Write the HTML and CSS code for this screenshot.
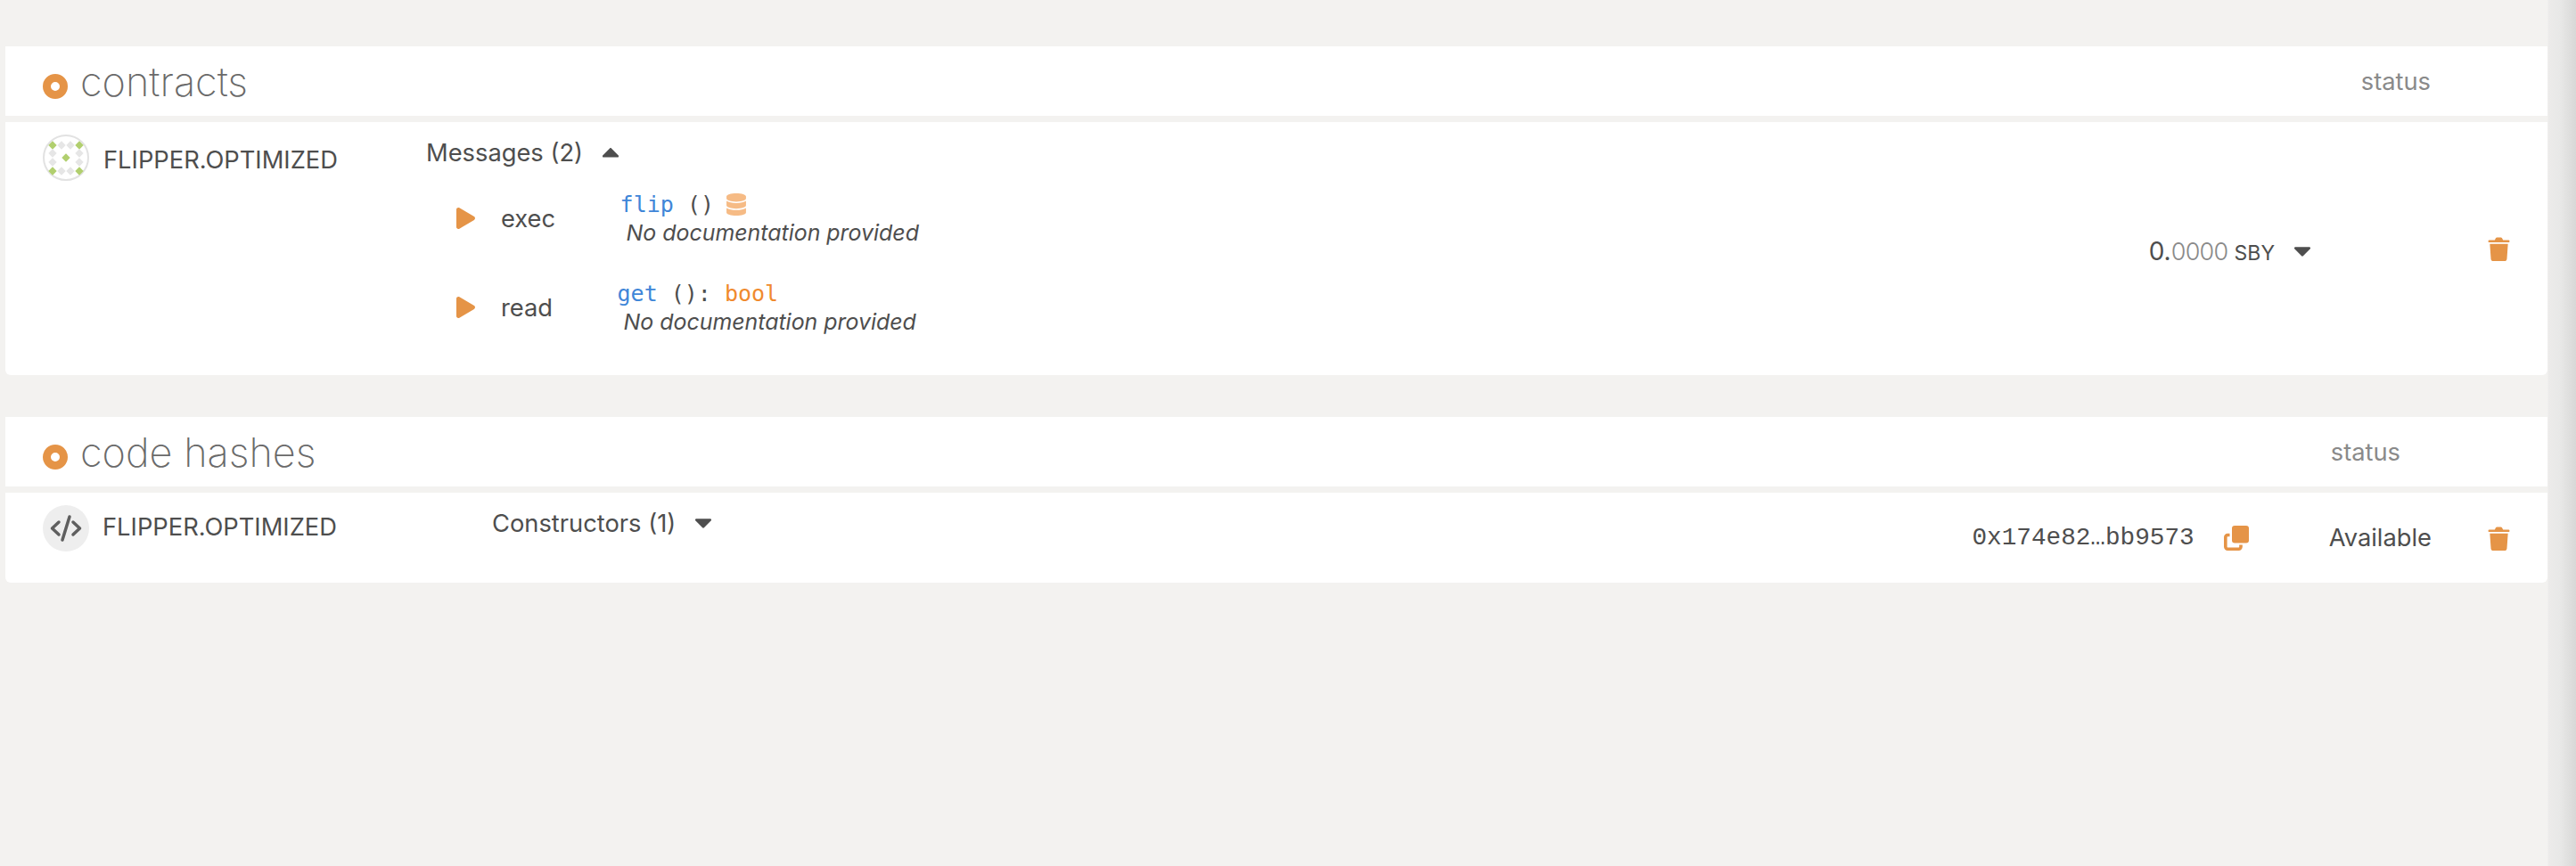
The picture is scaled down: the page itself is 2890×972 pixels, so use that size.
FILE: index.html
```html
<!DOCTYPE html>
<html lang="en">
<head>
    <meta charset="UTF-8">
    <title>Contracts</title>
    <link rel="stylesheet" href="styles.css">
</head>
<body>
    <svg class="defs" width="0" height="0">
        <defs>
            <path id="play" d="M424.4 214.7L72.4 6.6C43.8-10.3 0 6.1 0 47.9V464c0 37.5 40.7 60.1 72.4 41.3l352-208c31.4-18.5 31.5-64.1 0-82.6z"/>
            <path id="caret-down" d="M31.3 192h257.3c17.8 0 26.7 21.5 14.1 34.1L174.1 354.8c-7.8 7.8-20.5 7.8-28.3 0L17.2 226.1C4.6 213.5 13.5 192 31.3 192z"/>
            <path id="caret-up" d="M288.7 352H31.3c-17.8 0-26.7-21.5-14.1-34.1l128.7-129.6c7.8-7.8 20.5-7.8 28.3 0l128.7 129.6c12.5 12.6 3.6 34.1-14.2 34.1z"/>
            <g id="trash">
                <path d="M2 5h8l1.500-2.400C12 2 12.500 1.800 13 1.800h6c.5 0 1 .2 1.500.8L22 5h8c.8 0 1.200.4 1.200 1.100v.9c0 .7-.4 1.100-1.200 1.100H2C1.200 8.100.8 7.700.8 7v-.9C.8 5.400 1.200 5 2 5z"/>
                <path d="M3 10h26l-1.500 19c-.1 1.700-1.300 3-3 3H7.500c-1.700 0-2.900-1.300-3-3z"/>
            </g>
            <polygon id="dot" points="0,-4.700 4.700,0 0,4.700 -4.700,0"/>
        </defs>
    </svg>

    <section class="panel">
        <header class="panel-head">
            <span class="ring"></span>
            <h1>contracts</h1>
            <span class="col-status">status</span>
        </header>
        <div class="row row-contract">
            <div class="name-cell">
                <svg class="avatar" viewBox="0 0 52 52">
                    <circle class="avatar-ring" cx="26" cy="26" r="25"/>
                    <use class="dot-on" href="#dot" x="11" y="12"/>
                    <use class="dot-off" href="#dot" x="21" y="12"/>
                    <use class="dot-off" href="#dot" x="31" y="12"/>
                    <use class="dot-on" href="#dot" x="41" y="12"/>
                    <use class="dot-off" href="#dot" x="11" y="21"/>
                    <use class="dot-off" href="#dot" x="41" y="21"/>
                    <use class="dot-on" href="#dot" x="26" y="26"/>
                    <use class="dot-off" href="#dot" x="11" y="31"/>
                    <use class="dot-off" href="#dot" x="41" y="31"/>
                    <use class="dot-on" href="#dot" x="11" y="41"/>
                    <use class="dot-off" href="#dot" x="21" y="41"/>
                    <use class="dot-off" href="#dot" x="31" y="41"/>
                    <use class="dot-on" href="#dot" x="41" y="41"/>
                </svg>
                <span class="name">FLIPPER.OPTIMIZED</span>
            </div>
            <div class="messages">
                <div class="toggle">
                    <span>Messages (2)</span>
                    <svg class="caret" viewBox="14 186 292 170"><use href="#caret-up"/></svg>
                </div>
                <div class="message message-first">
                    <svg class="play" viewBox="0 0 448 512"><use href="#play"/></svg>
                    <span class="verb">exec</span>
                    <div class="signature">
                        <div class="code"><span class="fn">flip</span> ()<svg class="db" viewBox="0 0 448 512"><path d="M448 73.100v45.800C448 159.100 347.700 192 224 192S0 159.100 0 118.900V73.100C0 32.900 100.300 0 224 0s224 32.900 224 73.100zM448 176v102.900C448 319.100 347.700 352 224 352S0 319.100 0 278.900V176c48.100 33.100 136.200 48.600 224 48.600S399.900 209.100 448 176zm0 160v102.900C448 479.100 347.700 512 224 512S0 479.100 0 438.900V336c48.100 33.100 136.200 48.600 224 48.600S399.900 369.100 448 336z"/></svg></div>
                        <div class="doc">No documentation provided</div>
                    </div>
                </div>
                <div class="message">
                    <svg class="play" viewBox="0 0 448 512"><use href="#play"/></svg>
                    <span class="verb">read</span>
                    <div class="signature">
                        <div class="code"><span class="fn">get</span> (): <span class="type">bool</span></div>
                        <div class="doc">No documentation provided</div>
                    </div>
                </div>
            </div>
            <div class="balance">
                <span class="big">0.</span><span class="frac">0000</span><span class="unit">SBY</span>
                <svg class="caret caret-balance" viewBox="14 192 292 170"><use href="#caret-down"/></svg>
            </div>
            <svg class="trash trash-contract" viewBox="0 0 32 32" preserveAspectRatio="none"><use href="#trash"/></svg>
        </div>
    </section>

    <section class="panel">
        <header class="panel-head">
            <span class="ring"></span>
            <h1>code hashes</h1>
            <span class="col-status col-status-wide">status</span>
        </header>
        <div class="row row-code">
            <div class="name-cell name-cell-code">
                <svg class="avatar" viewBox="0 0 52 52">
                    <circle class="code-bg" cx="26" cy="26" r="26"/>
                    <path class="code-mark" d="M18 19l-7.500 7 7.500 7M34 19l7.500 7-7.500 7M30 13l-8 26"/>
                </svg>
                <span class="name">FLIPPER.OPTIMIZED</span>
            </div>
            <div class="toggle toggle-code">
                <span>Constructors (1)</span>
                <svg class="caret" viewBox="14 192 292 170"><use href="#caret-down"/></svg>
            </div>
            <span class="hash">0x174e82…bb9573</span>
            <svg class="copy" viewBox="0 0 28 28">
                <rect class="copy-front" x="9" y="0" width="19" height="19.500" rx="3"/>
                <path class="copy-back" d="M6.500 10.500H4.200a2.400 2.400 0 0 0-2.400 2.400v10.900a2.400 2.400 0 0 0 2.400 2.400h12.400a2.400 2.400 0 0 0 2.400-2.400V21.500"/>
            </svg>
            <span class="available">Available</span>
            <svg class="trash trash-code" viewBox="0 0 32 32" preserveAspectRatio="none"><use href="#trash"/></svg>
        </div>
    </section>
</body>
</html>
```

FILE: styles.css
```css
body {
    margin: 0;
    padding: 52px 32px 0 6px;
    height: 972px;
    box-sizing: border-box;
    overflow: hidden;
    background-color: #f3f2f0;
    background-image: linear-gradient(to right, #f3f2f0 2858px, #ecebea 2859px, #e8e8e7 2872px, #d8d8d7 2890px);
    font-family: Inter, "Liberation Sans", sans-serif;
    font-size: 27.300px;
    color: #4e4e4e;
}
.defs {
    position: absolute;
}
.panel {
    margin-bottom: 47px;
}
.panel-head {
    display: flex;
    align-items: center;
    height: 78px;
    margin-bottom: 7px;
    padding-left: 42px;
    padding-right: 131px;
    background: white;
}
.panel-head h1 {
    margin: 0 0 0 14px;
    font-size: 45px;
    font-weight: 200;
    color: #6a6a6a;
}
.ring {
    width: 28px;
    height: 28px;
    margin-top: 12px;
    box-sizing: border-box;
    border: 9px solid #e59447;
    border-radius: 50%;
}
.col-status {
    margin-left: auto;
    color: #8a8a8a;
}
.col-status-wide {
    margin-right: 34px;
}
.row {
    display: flex;
    padding-left: 42px;
    padding-right: 42px;
    background: white;
    border-radius: 0 0 6px 6px;
}
.row-contract {
    height: 284px;
}
.row-code {
    height: 101px;
    align-items: center;
}
.name-cell {
    display: flex;
    align-items: center;
    width: 430px;
    height: 52px;
    margin-top: 14px;
    flex-shrink: 0;
}
.name-cell-code {
    width: 504px;
    align-self: flex-start;
}
.avatar {
    width: 52px;
    height: 52px;
    margin-right: 16px;
}
.row-code .avatar {
    margin-right: 15px;
}
.name {
    margin-top: 4px;
}
.row-code .name {
    margin-top: -4px;
}
.avatar-ring {
    fill: white;
    stroke: #e2e2e2;
    stroke-width: 2;
}
.dot-on {
    fill: #b1cf6e;
}
.dot-off {
    fill: #e6e6e6;
}
.code-bg {
    fill: #eeeeee;
}
.code-mark {
    fill: none;
    stroke: #5f5f5f;
    stroke-width: 3.500;
    stroke-linecap: round;
    stroke-linejoin: round;
}
.toggle {
    display: flex;
    align-items: center;
    height: 36px;
    margin-top: 16px;
}
.toggle-code {
    align-self: flex-start;
    margin-top: 16px;
}
.caret {
    width: 18px;
    height: 11px;
    margin-left: 22px;
    fill: #4e4e4e;
}
.message {
    display: flex;
    align-items: center;
    margin-top: 38px;
    margin-left: 34px;
}
.message-first {
    margin-top: 25px;
}
.play {
    width: 21px;
    height: 24px;
    margin-right: 29px;
    fill: #e59447;
}
.verb {
    margin-right: 72.500px;
}
.code {
    display: flex;
    align-items: center;
    height: 30px;
    font-family: "DejaVu Sans Mono", monospace;
    font-size: 25px;
    white-space: pre;
}
.fn {
    color: #3f86d8;
}
.type {
    color: #f08a2e;
}
.db {
    width: 22px;
    height: 25px;
    margin-left: 14px;
    fill: #f6bb85;
}
.doc {
    padding-top: 2px;
    padding-left: 7px;
    font-size: 24.900px;
    font-style: italic;
}
.balance {
    display: flex;
    align-items: baseline;
    margin-left: auto;
    align-self: center;
    margin-top: 6px;
}
.big {
    font-size: 28px;
}
.frac {
    font-size: 27px;
    font-weight: 300;
    letter-spacing: -0.700px;
    color: #8a8a8a;
}
.unit {
    margin-left: 7px;
    font-size: 23px;
}
.caret-balance {
    align-self: center;
}
.trash {
    flex-shrink: 0;
    width: 25px;
    height: 28px;
    fill: #e59447;
}
.trash-contract {
    align-self: center;
    margin-left: 199px;
}
.trash-code {
    margin-left: 63px;
}
.hash {
    margin-left: auto;
    margin-right: -1px;
    font-family: "Liberation Mono", monospace;
    font-size: 27.700px;
}
.copy {
    flex-shrink: 0;
    width: 28px;
    height: 28px;
    margin-left: 34px;
}
.copy-front {
    fill: #e59447;
}
.copy-back {
    fill: none;
    stroke: #e59447;
    stroke-width: 3.600;
}
.available {
    margin-left: 90px;
}
```
